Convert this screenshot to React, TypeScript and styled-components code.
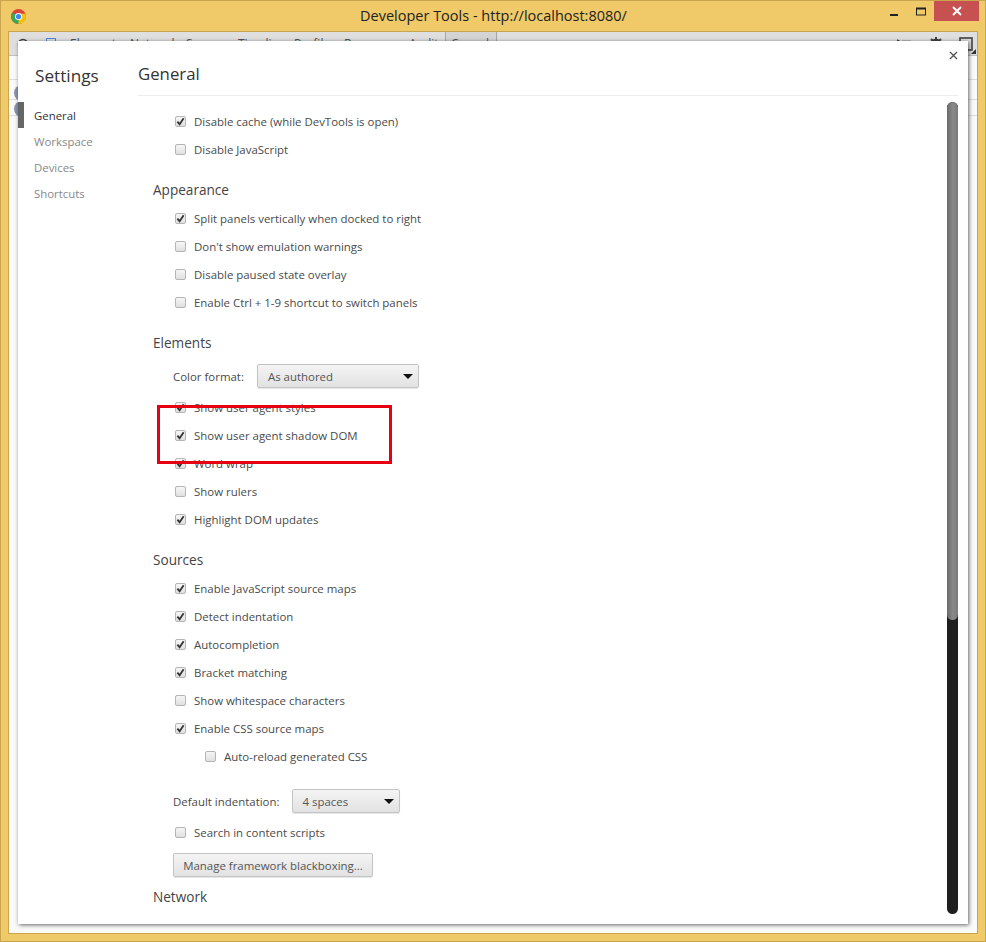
import React from "react";
import styled, { createGlobalStyle } from "styled-components";

const GlobalStyle = createGlobalStyle`
  html, body {
    margin: 0;
    padding: 0;
    background: #f0c968;
  }
  * {
    box-sizing: border-box;
  }
`;

const Frame = styled.div`
  position: relative;
  width: 986px;
  height: 942px;
  display: flex;
  flex-direction: column;
  overflow: hidden;
  background: #f0c968;
  border: 1px solid #c9a54e;
  font-family: "Open Sans", "Liberation Sans", sans-serif;
`;

const TitleBar = styled.div`
  height: 30px;
  flex: none;
  display: flex;
  align-items: center;
  justify-content: space-between;
  padding-left: 10px;
  position: relative;
`;

const WindowTitle = styled.div`
  position: absolute;
  left: 359px;
  top: 5px;
  font-size: 14.5px;
  line-height: 20px;
  color: #222;
  white-space: nowrap;
`;

const WindowButtons = styled.div`
  display: flex;
  align-items: flex-start;
  height: 100%;
  margin-right: 6px;
`;

const WindowButton = styled.div<{ $close?: boolean }>`
  width: ${(p) => (p.$close ? "45px" : "27px")};
  height: 20px;
  display: flex;
  align-items: center;
  justify-content: center;
  background: ${(p) => (p.$close ? "#c75050" : "transparent")};
`;

const Inner = styled.div`
  position: relative;
  margin: 0 7px 7px 7px;
  flex: 1;
  background: #fff;
  border: 1px solid #c9a54e;
  overflow: hidden;
`;

const Toolbar = styled.div`
  height: 24px;
  background: #e4e4e4;
  display: flex;
  align-items: center;
  font-size: 12px;
  color: #555;
  border-bottom: 1px solid #c4c4c4;
`;

const ToolTab = styled.span<{ $width: number; $left?: number }>`
  flex: none;
  width: ${(p) => p.$width}px;
  margin-left: ${(p) => p.$left ?? 0}px;
`;

const ConsoleTab = styled.span`
  flex: none;
  width: 52px;
  height: 100%;
  padding: 3px 0 0 5px;
  background: #d9d9d9;
  border-left: 1px solid #aaa;
  border-right: 1px solid #aaa;
`;

const ToolIcon = styled.span<{ $left: number }>`
  flex: none;
  margin-left: ${(p) => p.$left}px;
  line-height: 0;
`;

const DockTriangle = styled.span`
  position: absolute;
  right: 1px;
  top: 17px;
  width: 0;
  height: 0;
  border-left: 5px solid transparent;
  border-bottom: 5px solid #333;
`;

const BackRow = styled.div<{ $height: number }>`
  height: ${(p) => p.$height}px;
  border-bottom: 1px solid #e2e2e2;
`;

const BackCircle = styled.div<{ $top: number }>`
  position: absolute;
  left: 5px;
  top: ${(p) => p.$top}px;
  width: 16px;
  height: 16px;
  border-radius: 50%;
  background: #8a9ab5;
`;

const Shade = styled.div`
  position: absolute;
  inset: 0;
  background: rgba(0, 0, 0, 0.02);
`;

const Dialog = styled.div`
  position: absolute;
  left: 9px;
  top: 9px;
  width: 950px;
  height: 883px;
  display: flex;
  background: #fff;
  box-shadow: 1px 1px 4px rgba(0, 0, 0, 0.6);
`;

const Sidebar = styled.div`
  width: 120px;
  flex: none;
  display: flex;
  flex-direction: column;
`;

const SettingsTitle = styled.div`
  font-size: 17.2px;
  line-height: 24px;
  color: #333;
  margin: 23px 0 0 17px;
  height: 38px;
`;

const SideItem = styled.div<{ $active?: boolean }>`
  height: 26px;
  line-height: 27px;
  padding-left: ${(p) => (p.$active ? "10px" : "16px")};
  border-left: ${(p) => (p.$active ? "6px solid #666" : "none")};
  font-size: 11.4px;
  color: ${(p) => (p.$active ? "#333" : "#888")};
`;

const Main = styled.div`
  position: relative;
  flex: 1;
  min-width: 0;
  margin-right: 10px;
  display: flex;
  flex-direction: column;
`;

const Header = styled.div`
  height: 55px;
  flex: none;
  border-bottom: 1px solid #eee;
  font-size: 16.8px;
  line-height: 24px;
  color: #333;
  padding-top: 21px;
`;

const Content = styled.div`
  flex: 1;
  overflow: hidden;
  padding: 11px 0 0 15px;
`;

const SectionTitle = styled.div<{ $tight?: boolean }>`
  font-size: 13.6px;
  line-height: 20px;
  height: 20px;
  color: #444;
  margin: ${(p) => (p.$tight ? "10px" : "17px")} 0 4px 0;
`;

const Row = styled.label<{ $nested?: boolean }>`
  display: flex;
  align-items: center;
  height: 28px;
  padding-left: ${(p) => (p.$nested ? "52px" : "22px")};
  font-size: 11.45px;
  color: #4a4a4a;
  white-space: nowrap;
`;

const Box = styled.span`
  width: 11px;
  height: 11px;
  flex: none;
  margin-right: 8px;
  border: 1px solid #b5b5b5;
  border-radius: 2px;
  background: linear-gradient(#f6f6f6, #e0e0e0);
  display: flex;
  align-items: center;
  justify-content: center;
`;

const SelectRow = styled.div<{ $gap: number; $top: number }>`
  display: flex;
  align-items: center;
  height: 24px;
  margin: ${(p) => p.$top}px 0 5px 20px;
  font-size: 11.45px;
  color: #4a4a4a;
  gap: ${(p) => p.$gap}px;
  white-space: nowrap;
`;

const Select = styled.div<{ $width: number }>`
  width: ${(p) => p.$width}px;
  height: 24px;
  display: flex;
  align-items: center;
  justify-content: space-between;
  padding: 0 5px 0 10px;
  border: 1px solid #c4c4c4;
  border-radius: 2px;
  background: linear-gradient(#f4f4f4, #e2e2e2);
  box-shadow: 0 1px 1px rgba(0, 0, 0, 0.1);
  color: #555;
`;

const Caret = styled.span`
  width: 0;
  height: 0;
  border-left: 5px solid transparent;
  border-right: 5px solid transparent;
  border-top: 5px solid #111;
`;

const Button = styled.div`
  width: 200px;
  height: 24px;
  margin: 7px 0 0 20px;
  display: flex;
  align-items: center;
  justify-content: center;
  border: 1px solid #c4c4c4;
  border-radius: 2px;
  background: linear-gradient(#f4f4f4, #e2e2e2);
  box-shadow: 0 1px 1px rgba(0, 0, 0, 0.1);
  font-size: 11.45px;
  color: #555;
  white-space: nowrap;
`;

const CloseIcon = styled.div`
  position: absolute;
  right: 10px;
  top: 10px;
  line-height: 0;
`;

const ScrollTrack = styled.div`
  position: absolute;
  right: 0;
  top: 61px;
  bottom: 10px;
  width: 11px;
  border-radius: 6px;
  background: #1f1f1f;
  overflow: hidden;
`;

const ScrollThumb = styled.div`
  height: 518px;
  border-radius: 6px;
  background: linear-gradient(90deg, #6b6b6b, #8a8a8a 55%, #7a7a7a);
`;

const Highlight = styled.div`
  position: absolute;
  left: 156px;
  top: 404px;
  width: 235px;
  height: 59px;
  border: 3px solid #e60012;
`;

function Check({ checked }: { checked?: boolean }) {
  return (
    <Box>
      {checked && (
        <svg width="9" height="9" viewBox="0 0 10 10">
          <path d="M1.5 5.2 L4 8 L8.5 1.5" fill="none" stroke="#333" strokeWidth="2" />
        </svg>
      )}
    </Box>
  );
}

function Option({ label, checked, nested }: { label: string; checked?: boolean; nested?: boolean }) {
  return (
    <Row $nested={nested}>
      <Check checked={checked} />
      {label}
    </Row>
  );
}

function ChromeLogo() {
  return (
    <svg width="15" height="15" viewBox="0 0 16 16">
      <circle cx="8" cy="8" r="8" fill="#db4437" />
      <path d="M8 8 L1.1 4 A8 8 0 0 0 8 16 L11.5 9.5 Z" fill="#3aa757" />
      <path d="M8 8 L8 16 A8 8 0 0 0 15.4 5 L8 5 Z" fill="#f4c20d" />
      <circle cx="8" cy="8" r="3.8" fill="#fff" />
      <circle cx="8" cy="8" r="2.8" fill="#4285f4" />
    </svg>
  );
}

export default function App() {
  return (
    <>
      <GlobalStyle />
      <Frame>
        <TitleBar>
          <ChromeLogo />
          <WindowTitle>Developer Tools - http://localhost:8080/</WindowTitle>
          <WindowButtons>
            <WindowButton>
              <svg width="10" height="10" viewBox="0 0 10 10">
                <rect x="1" y="8" width="8" height="2" fill="#222" />
              </svg>
            </WindowButton>
            <WindowButton>
              <svg width="10" height="10" viewBox="0 0 10 10">
                <rect x="0.5" y="2" width="9" height="7" fill="none" stroke="#222" />
                <rect x="0.5" y="2" width="9" height="1.5" fill="#222" />
              </svg>
            </WindowButton>
            <WindowButton $close>
              <svg width="12" height="10" viewBox="0 0 12 10">
                <path d="M2 1 L10 9 M10 1 L2 9" stroke="#fff" strokeWidth="1.9" />
              </svg>
            </WindowButton>
          </WindowButtons>
        </TitleBar>
        <Inner>
          <Toolbar>
            <ToolIcon $left={8}>
              <svg width="12" height="12" viewBox="0 0 12 12">
                <circle cx="6" cy="6" r="4.5" fill="none" stroke="#444" strokeWidth="1.6" />
              </svg>
            </ToolIcon>
            <ToolIcon $left={17}>
              <svg width="10" height="12" viewBox="0 0 10 12">
                <rect x="0.5" y="0.5" width="9" height="11" fill="#dbe5f5" stroke="#5f86c8" />
              </svg>
            </ToolIcon>
            <ToolTab $width={60} $left={14}>Elements</ToolTab>
            <ToolTab $width={56}>Network</ToolTab>
            <ToolTab $width={52}>Sources</ToolTab>
            <ToolTab $width={56}>Timeline</ToolTab>
            <ToolTab $width={50}>Profiles</ToolTab>
            <ToolTab $width={65}>Resources</ToolTab>
            <ToolTab $width={36}>Audits</ToolTab>
            <ConsoleTab>Console</ConsoleTab>
            <ToolIcon $left={400}>
              <svg width="15" height="10" viewBox="0 0 15 10">
                <path d="M0 1 L3 3 M5 2.5 H14" stroke="#444" strokeWidth="1.6" />
              </svg>
            </ToolIcon>
            <ToolIcon $left={16}>
              <svg width="16" height="14" viewBox="0 0 16 14">
                <circle cx="8" cy="7" r="5.5" fill="#444" />
                <path d="M8 0 V14 M1 7 H15 M3 2 L13 12 M13 2 L3 12" stroke="#444" strokeWidth="2" />
              </svg>
            </ToolIcon>
            <ToolIcon $left={15}>
              <svg width="14" height="14" viewBox="0 0 14 14">
                <rect x="1" y="1" width="12" height="12" fill="none" stroke="#444" strokeWidth="1.6" />
              </svg>
            </ToolIcon>
          </Toolbar>
          <DockTriangle />
          <BackRow $height={24} />
          <BackRow $height={20} />
          <BackRow $height={16} />
          <BackCircle $top={53} />
          <BackCircle $top={69} />
          <Shade />
          <Dialog>
            <Sidebar>
              <SettingsTitle>Settings</SettingsTitle>
              <SideItem $active>General</SideItem>
              <SideItem>Workspace</SideItem>
              <SideItem>Devices</SideItem>
              <SideItem>Shortcuts</SideItem>
            </Sidebar>
            <Main>
              <Header>General</Header>
              <Content>
                <Option label="Disable cache (while DevTools is open)" checked />
                <Option label="Disable JavaScript" />
                <SectionTitle>Appearance</SectionTitle>
                <Option label="Split panels vertically when docked to right" checked />
                <Option label="Don't show emulation warnings" />
                <Option label="Disable paused state overlay" />
                <Option label="Enable Ctrl + 1-9 shortcut to switch panels" />
                <SectionTitle>Elements</SectionTitle>
                <SelectRow $gap={13} $top={11}>
                  Color format:
                  <Select $width={162}>
                    As authored
                    <Caret />
                  </Select>
                </SelectRow>
                <Option label="Show user agent styles" checked />
                <Option label="Show user agent shadow DOM" checked />
                <Option label="Word wrap" checked />
                <Option label="Show rulers" />
                <Option label="Highlight DOM updates" checked />
                <SectionTitle>Sources</SectionTitle>
                <Option label="Enable JavaScript source maps" checked />
                <Option label="Detect indentation" checked />
                <Option label="Autocompletion" checked />
                <Option label="Bracket matching" checked />
                <Option label="Show whitespace characters" />
                <Option label="Enable CSS source maps" checked />
                <Option label="Auto-reload generated CSS" nested />
                <SelectRow $gap={12} $top={19}>
                  Default indentation:
                  <Select $width={108}>
                    4 spaces
                    <Caret />
                  </Select>
                </SelectRow>
                <Option label="Search in content scripts" />
                <Button>Manage framework blackboxing...</Button>
                <SectionTitle $tight>Network</SectionTitle>
              </Content>
              <ScrollTrack>
                <ScrollThumb />
              </ScrollTrack>
            </Main>
            <CloseIcon>
              <svg width="9" height="9" viewBox="0 0 9 9">
                <path d="M1 1 L8 8 M8 1 L1 8" stroke="#555" strokeWidth="1.4" />
              </svg>
            </CloseIcon>
          </Dialog>
        </Inner>
        <Highlight />
      </Frame>
    </>
  );
}
